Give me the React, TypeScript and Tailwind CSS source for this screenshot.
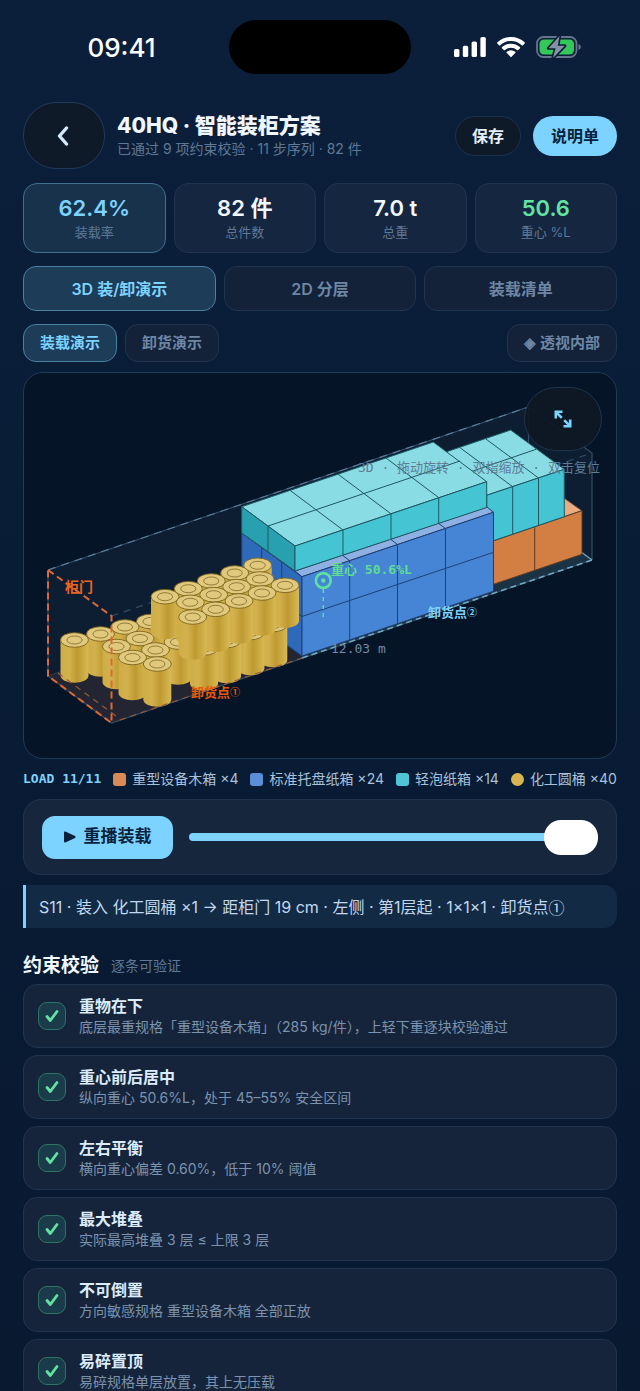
import type { ReactNode } from 'react';

type Point = [number, number];

const DrumShape: React.FC<{ at: Point }> = ({ at: [x, y] }) => (
  <g>
    <path
      d={`M${x - 14} ${y}v35.5a14 7.3 0 0 0 28 0V${y}z`}
      fill="url(#drum)"
    />
    <ellipse
      cx={x}
      cy={y}
      rx="14"
      ry="7.3"
      fill="#e0c97c"
      stroke="#7d6420"
      strokeWidth="0.9"
    />
    <ellipse
      cx={x}
      cy={y}
      rx="7.6"
      ry="4"
      fill="none"
      stroke="#8a7030"
      strokeWidth="0.9"
    />
  </g>
);

const lowerDrums: Point[] = [
  [150.5, 621.5],
  [125, 627],
  [100.5, 634],
  [74.5, 640],
  [178, 642],
  [140, 638.5],
  [116.5, 646.5],
  [155.5, 650],
  [132.5, 657.5],
  [273.3, 624.5],
  [250.5, 632.5],
  [227, 640.5],
  [204, 648],
  [157.3, 664],
];

const upperDrums: Point[] = [
  [257.7, 565.3],
  [234.7, 573],
  [211.3, 581],
  [188.3, 588.7],
  [165, 596.7],
  [260, 579],
  [236.7, 586.7],
  [213.7, 594.7],
  [190.3, 602.3],
  [285, 585.3],
  [262, 593],
  [239, 601],
  [215.7, 609.3],
  [192.7, 617],
];

const ContainerScene = () => (
  <svg
    viewBox="24 373 592 385"
    className="block h-auto w-full font-['DejaVu_Sans_Mono','Noto_Sans_CJK_SC',monospace]"
    role="img"
    aria-label="40HQ 装载三维视图"
  >
    <defs>
      <linearGradient id="drum">
        <stop offset="0" stopColor="#ceac46" />
        <stop offset="0.3" stopColor="#d3b14d" />
        <stop offset="0.6" stopColor="#bf9a32" />
        <stop offset="1" stopColor="#d8b953" />
      </linearGradient>
    </defs>

    {/* container shell */}
    <path d="M48 570 528.5 407V513L48 676z" fill="#0d1e33" />
    <path d="M528.5 407 592 453V560L528.5 513z" fill="#0d1e33" />
    <path d="M48 676 528.5 513 592 560 111.5 723z" fill="#1b3245" />
    <path d="M48 676 235 612.5 302 657 111.5 723z" fill="#232532" />
    <g fill="none" stroke="#334d66" strokeWidth="1.2">
      <path d="M48 570V676M48 570 528.5 407 592 453V560M528.5 407V513M48 676 111.5 723 592 560" />
      <path
        d="M48 570 528.5 407"
        stroke="#5c7f9b"
        strokeDasharray="8 6"
      />
      <path d="M111.5 616 592 453" strokeDasharray="7 6" />
      <path d="M48 676 528.5 513" opacity="0.6" />
      <path d="M592 560 573 546" stroke="#7ba6c2" />
    </g>

    {/* wooden crates */}
    <g stroke="#5a3b28" strokeWidth="1" strokeLinejoin="round">
      <path d="M530 511 564.5 498.3 582 510.7 534.7 527z" fill="#e8ab82" />
      <path d="M487 543 582 510.7V554.3L487 586.5z" fill="#d37f43" />
      <path d="M534.7 526.7V570.3" />
    </g>

    {/* light cartons, far stack */}
    <g stroke="#1f5863" strokeWidth="1" strokeLinejoin="round">
      <path d="M434 456 510.7 430 564.3 469.3 486.7 495.3z" fill="#8adce4" />
      <path d="M486.7 495.3 564.3 469.3V516.7L486.7 543z" fill="#45c4d3" />
      <path
        d="M460 447.7 512.7 486.7V534M485.5 438.7 538.5 478V525.3M460 475.5 536 449.3"
        fill="none"
      />
    </g>

    {/* pallet cartons */}
    <g stroke="#1f4072" strokeWidth="1" strokeLinejoin="round">
      <path d="M241.7 533 302 576.7V656L241.7 612z" fill="#2f69ba" />
      <path d="M261.7 547.5V626M281.7 562V641M241.7 572 302 616.5" fill="none" />
      <path d="M295 571 487 507 493.5 512.3 302 576.7z" fill="#8fb0e2" />
      <path d="M302 576.7 493.5 512.3V591.3L302 656z" fill="#4685d5" />
      <path
        d="M302 616.5 493.5 552.3M343 555.7 349.7 560.7V640M391 539.5 397.5 544.5V624M438.7 523.5 445.5 528.5V607.5"
        fill="none"
      />
    </g>

    {/* light cartons, near stack */}
    <g stroke="#1f5863" strokeWidth="1" strokeLinejoin="round">
      <path d="M241.7 506.7 433.3 442 486.7 481.7 295 546z" fill="#8adce4" />
      <path d="M241.7 506.7 295 546V571L241.7 533z" fill="#28a0af" />
      <path d="M295 546 486.7 481.7V507.5L295 571z" fill="#45c4d3" />
      <path
        d="M268 526V552.5M268 526 460 461M290 490.3 343 530V555.3M338 474.2 391 513.8V539.3M386 458 438.7 497.6V523.3"
        fill="none"
      />
    </g>

    {lowerDrums.map((at) => (
      <DrumShape key={at.join()} at={at} />
    ))}
    {upperDrums.map((at) => (
      <DrumShape key={at.join()} at={at} />
    ))}

    {/* near edge and door frame */}
    <path
      d="M302 658 592 560"
      stroke="#6fa9c4"
      strokeWidth="1.6"
      strokeDasharray="6 4"
    />
    <path
      d="M120 720 302 658M58 673 120 719"
      fill="none"
      stroke="#9a5a38"
      strokeWidth="1.2"
      strokeDasharray="6 5"
    />
    <path
      d="M48 570 111.5 616V723L48 676z"
      fill="none"
      stroke="#dd6833"
      strokeWidth="2"
      strokeDasharray="7 4"
    />

    {/* centre of gravity */}
    <g fill="none" stroke="#5ee0a0">
      <circle cx="323.3" cy="580.5" r="7.4" strokeWidth="2.6" />
      <circle cx="323.3" cy="580.5" r="2.2" fill="#5ee0a0" stroke="none" />
      <path d="M323.3 589V619" strokeWidth="1.4" strokeDasharray="4 4" />
    </g>

    <g fontSize="13" fontWeight="700">
      <text x="65" y="592" fontSize="14" fill="#ea661d">
        柜门
      </text>
      <text x="191" y="697" fill="#ea580c">
        卸货点<tspan fontSize="10" dy="-1">①</tspan>
      </text>
      <text x="428" y="617" fill="#7dd3fc">
        卸货点<tspan fontSize="10" dy="-1">②</tspan>
      </text>
      <text x="331" y="574" fill="#5fdc92">
        重心 50.6%L
      </text>
    </g>
    <text x="331" y="653" fontSize="13" fill="#7388a2">
      12.03 m
    </text>
  </svg>
);

const StatusBar = () => (
  <div className="grid h-[94px] shrink-0 grid-cols-[1fr_182px_1fr] items-center">
    <time className="pl-3.5 text-center font-['Inter',sans-serif] text-[26px] font-medium text-white">
      09:41
    </time>
    <div className="h-[54px] rounded-full bg-black" />
    <div className="flex items-center pl-[43px]">
      <svg viewBox="0 0 32 20" className="h-5 w-8 fill-white">
        <rect y="12" width="5.4" height="8" rx="1.6" />
        <rect x="8.8" y="8.800" width="5.400" height="11.200" rx="1.6" />
        <rect x="17.6" y="4.5" width="5.400" height="15.5" rx="1.6" />
        <rect x="26.4" width="5.400" height="20" rx="1.6" />
      </svg>
      <svg viewBox="0 0 28 20" className="ml-[11px] h-5 w-7 fill-white">
        <path d="M14 0C8.6 0 3.8 2 .4 5.300a.9.9 0 0 0 0 1.300l1.600 1.600a.9.9 0 0 0 1.300 0A15.500 15.500 0 0 1 14 4c4.200 0 7.900 1.600 10.700 4.200a.9.9 0 0 0 1.300 0l1.600-1.600a.9.9 0 0 0 0-1.300C24.200 2 19.400 0 14 0z" />
        <path d="M14 6.700c-3.500 0-6.600 1.300-8.900 3.400a.9.9 0 0 0 0 1.300l1.700 1.600a.9.9 0 0 0 1.200 0 8.900 8.900 0 0 1 12 0 .9.9 0 0 0 1.200 0l1.700-1.600a.9.9 0 0 0 0-1.300A13.200 13.200 0 0 0 14 6.700z" />
        <path d="M14 13.300c-1.600 0-3.100.6-4.200 1.500a.9.9 0 0 0 0 1.300l3.600 3.600a.9.9 0 0 0 1.200 0l3.600-3.600a.9.9 0 0 0 0-1.300 6.600 6.600 0 0 0-4.200-1.500z" />
      </svg>
      <svg viewBox="0 0 45 24" className="ml-[11px] h-6 w-[45px]">
        <rect
          x="1"
          y="2"
          width="39.5"
          height="20"
          rx="6.5"
          fill="none"
          stroke="#66748c"
          strokeWidth="1.8"
        />
        <path d="M42.500 9v6c1.400-.5 2.300-1.700 2.300-3s-.9-2.500-2.300-3z" fill="#66748c" />
        <rect x="3.5" y="4.5" width="34.5" height="15" rx="4.5" fill="#34c759" />
        <path
          d="M23.500 1 12.500 13.200h7L17 23 28.800 10.800h-7z"
          fill="#8592a6"
          stroke="#0a1d36"
          strokeWidth="3.2"
          paintOrder="stroke"
          strokeLinejoin="round"
        />
      </svg>
    </div>
  </div>
);

const Header = () => (
  <header className="flex items-center">
    <button
      type="button"
      aria-label="返回"
      className="flex h-[67px] w-[82px] items-center justify-center rounded-[33px] border border-[#203a5c] bg-[#0f1a29] text-[#d6e9fb]"
    >
      <svg viewBox="0 0 16 20" className="h-5 w-4" fill="none">
        <path
          d="M10.500 2 3.500 10l7 8"
          stroke="currentColor"
          strokeWidth="3.4"
          strokeLinecap="round"
          strokeLinejoin="round"
        />
      </svg>
    </button>
    <div className="ml-3 flex-1">
      <h1 className="text-[21px] leading-[26px] font-extrabold text-[#f0f7ff]">
        40HQ · 智能装柜方案
      </h1>
      <p className="text-[14px] leading-5 text-[#5f7894]">
        已通过 9 项约束校验 · 11 步序列 · 82 件
      </p>
    </div>
    <button
      type="button"
      className="h-10 rounded-[20px] border border-[#1b3150] bg-[#0f1a29] px-4 text-[16px] font-semibold text-[#e2effc]"
    >
      保存
    </button>
    <button
      type="button"
      className="ml-3 h-10 rounded-[20px] bg-[#7dd3ff] px-[18px] text-[16px] font-semibold text-[#07213c]"
    >
      说明单
    </button>
  </header>
);

const stats = [
  { value: '62.4%', label: '装载率', box: 'border-[#41708f] bg-[#18324c]', color: 'text-[#7dd3ff]' },
  { value: '82 件', label: '总件数', box: 'border-[#21344f] bg-[#152640]', color: 'text-[#f0f7ff]' },
  { value: '7.0 t', label: '总重', box: 'border-[#21344f] bg-[#152640]', color: 'text-[#f0f7ff]' },
  { value: '50.6', label: '重心 %L', box: 'border-[#21344f] bg-[#152640]', color: 'text-[#62e3a2]' },
];

const Pill: React.FC<{
  active?: boolean;
  className: string;
  children: ReactNode;
}> = ({ active, className, children }) => (
  <button
    type="button"
    aria-pressed={!!active}
    className={`rounded-[13px] border font-semibold ${
      active
        ? 'border-[#4a80a0] bg-[#1d3c58] text-[#7dd3ff]'
        : 'border-[#21344f] bg-[#132239] text-[#6d87a5]'
    } ${className}`}
  >
    {children}
  </button>
);

const legend = [
  { label: '重型设备木箱 ×4', swatch: 'rounded-[3px] bg-[#d98a57]' },
  { label: '标准托盘纸箱 ×24', swatch: 'rounded-[3px] bg-[#5a8fd8]' },
  { label: '轻泡纸箱 ×14', swatch: 'rounded-[3px] bg-[#50c5d5]' },
  { label: '化工圆桶 ×40', swatch: 'rounded-full bg-[#d8b552]' },
];

const checks = [
  { title: '重物在下', detail: '底层最重规格「重型设备木箱」（285 kg/件），上轻下重逐块校验通过' },
  { title: '重心前后居中', detail: '纵向重心 50.6%L，处于 45–55% 安全区间' },
  { title: '左右平衡', detail: '横向重心偏差 0.60%，低于 10% 阈值' },
  { title: '最大堆叠', detail: '实际最高堆叠 3 层 ≤ 上限 3 层' },
  { title: '不可倒置', detail: '方向敏感规格 重型设备木箱 全部正放' },
  { title: '易碎置顶', detail: '易碎规格单层放置，其上无压载' },
];

const App = () => (
  <div
    lang="zh-CN"
    className="flex h-screen flex-col overflow-hidden bg-linear-to-b from-[#0b1f3b] via-[#091c35] to-[#081930] font-['Inter','Noto_Sans_CJK_SC',sans-serif]"
  >
    <StatusBar />
    <main className="flex-1 overflow-y-auto px-[23px] pt-2 pb-6 [scrollbar-width:none]">
      <Header />

      <dl className="mt-3.5 grid grid-cols-4 gap-2">
        {stats.map(({ value, label, box, color }) => (
          <div
            key={label}
            className={`flex h-[70px] flex-col-reverse items-center justify-center rounded-[14px] border ${box}`}
          >
            <dt className="text-[13px] leading-5 text-[#5f7894]">{label}</dt>
            <dd className={`text-[22px] leading-7 font-semibold ${color}`}>{value}</dd>
          </div>
        ))}
      </dl>

      <div className="mt-[13px] grid grid-cols-3 gap-2">
        <Pill active className="h-[45px] text-[16px]">
          3D 装/卸演示
        </Pill>
        <Pill className="h-[45px] text-[16px]">2D 分层</Pill>
        <Pill className="h-[45px] text-[16px]">装载清单</Pill>
      </div>

      <div className="mt-[13px] flex gap-2">
        <Pill active className="h-[38px] px-4 text-[15px]">
          装载演示
        </Pill>
        <Pill className="h-[38px] px-4 text-[15px]">卸货演示</Pill>
        <Pill className="ml-auto h-[38px] px-4 text-[15px]">◈ 透视内部</Pill>
      </div>

      <section className="relative mt-[10px] overflow-hidden rounded-[20px] border border-[#213a55] bg-[#051427]">
        <ContainerScene />
        <p className="absolute top-[85px] right-4 font-['DejaVu_Sans_Mono','Noto_Sans_CJK_SC',monospace] text-[13px] leading-5 text-[#5f7c95]">
          3D · 拖动旋转 · 双指缩放 · 双击复位
        </p>
        <button
          type="button"
          aria-label="全屏"
          className="absolute top-3.5 right-3.5 flex h-16 w-[78px] items-center justify-center rounded-[32px] border border-[#20344c] bg-[#0e1824]/95 text-[#7dd3ff]"
        >
          <svg viewBox="0 0 18 18" className="size-[18px]" fill="none">
            <path
              d="M1.800 8.500V1.800h6.700M1.800 1.800l6 6M16.200 9.500v6.700H9.500M16.200 16.200l-6-6"
              stroke="currentColor"
              strokeWidth="2.6"
            />
          </svg>
        </button>
      </section>

      <div className="mt-[10px] flex items-center justify-between text-[14px] leading-5 whitespace-nowrap text-[#a9c1da]">
        <span className="font-['DejaVu_Sans_Mono',monospace] text-[13px] font-bold text-[#7dd3ff]">
          LOAD 11/11
        </span>
        {legend.map(({ label, swatch }) => (
          <span key={label} className="flex items-center gap-1.5">
            <i className={`size-[13px] ${swatch}`} />
            {label}
          </span>
        ))}
      </div>

      <div className="mt-[10px] flex h-[76px] items-center gap-4 rounded-[18px] border border-[#21344f] bg-[#15263d] px-[18px]">
        <button
          type="button"
          className="flex h-[43px] w-[131px] items-center justify-center gap-2 rounded-[13px] bg-[#7dd3ff] text-[17px] font-bold text-[#07213c]"
        >
          <svg viewBox="0 0 12 12" className="size-3 fill-current">
            <path d="M1.400.6 11 5.100a1 1 0 0 1 0 1.800L1.400 11.400A1 1 0 0 1 0 10.500V1.500A1 1 0 0 1 1.400.6z" />
          </svg>
          重播装载
        </button>
        <input
          type="range"
          aria-label="装载步骤"
          min={0}
          max={11}
          defaultValue={11}
          className="h-2 min-w-0 flex-1 appearance-none rounded-full bg-[#7dd3ff] [&::-webkit-slider-thumb]:h-[35px] [&::-webkit-slider-thumb]:w-[54px] [&::-webkit-slider-thumb]:appearance-none [&::-webkit-slider-thumb]:rounded-[17px] [&::-webkit-slider-thumb]:bg-white"
        />
      </div>

      <p className="mt-[10px] flex h-[43px] items-center rounded-r-[13px] border-l-3 border-[#7dd3ff] bg-[#122a44] pl-[13px] text-[16px] whitespace-nowrap text-[#c3d8ee]">
        S11 · 装入 化工圆桶 ×1 → 距柜门 19 cm · 左侧 · 第1层起 · 1×1×1 · 卸货点
        <span className="font-['Noto_Sans_CJK_SC',sans-serif]">①</span>
      </p>

      <div className="mt-6 flex items-center gap-3">
        <h2 className="text-[19px] leading-7 font-bold text-[#f0f7ff]">约束校验</h2>
        <span className="text-[14px] leading-5 text-[#5f7894]">逐条可验证</span>
      </div>

      <ul className="mt-1 flex flex-col gap-[7px]">
        {checks.map(({ title, detail }) => (
          <li
            key={title}
            className="flex h-16 items-center gap-[13px] rounded-[14px] border border-[#21344f] bg-[#15243b] px-3.5"
          >
            <span className="flex size-7 shrink-0 items-center justify-center rounded-[9px] border border-[#2f7566] bg-[#1a3b4a]">
              <svg viewBox="0 0 14 14" className="size-3.5" fill="none">
                <path
                  d="M2 7.500 5.300 11.500 12 2.500"
                  stroke="#62e3a2"
                  strokeWidth="2.8"
                  strokeLinecap="round"
                  strokeLinejoin="round"
                />
              </svg>
            </span>
            <div className="whitespace-nowrap">
              <h3 className="text-[16px] leading-[22px] font-semibold text-[#dcecfb]">{title}</h3>
              <p className="text-[14px] leading-5 text-[#7b93ae]">{detail}</p>
            </div>
          </li>
        ))}
      </ul>
    </main>
  </div>
);

export default App;
